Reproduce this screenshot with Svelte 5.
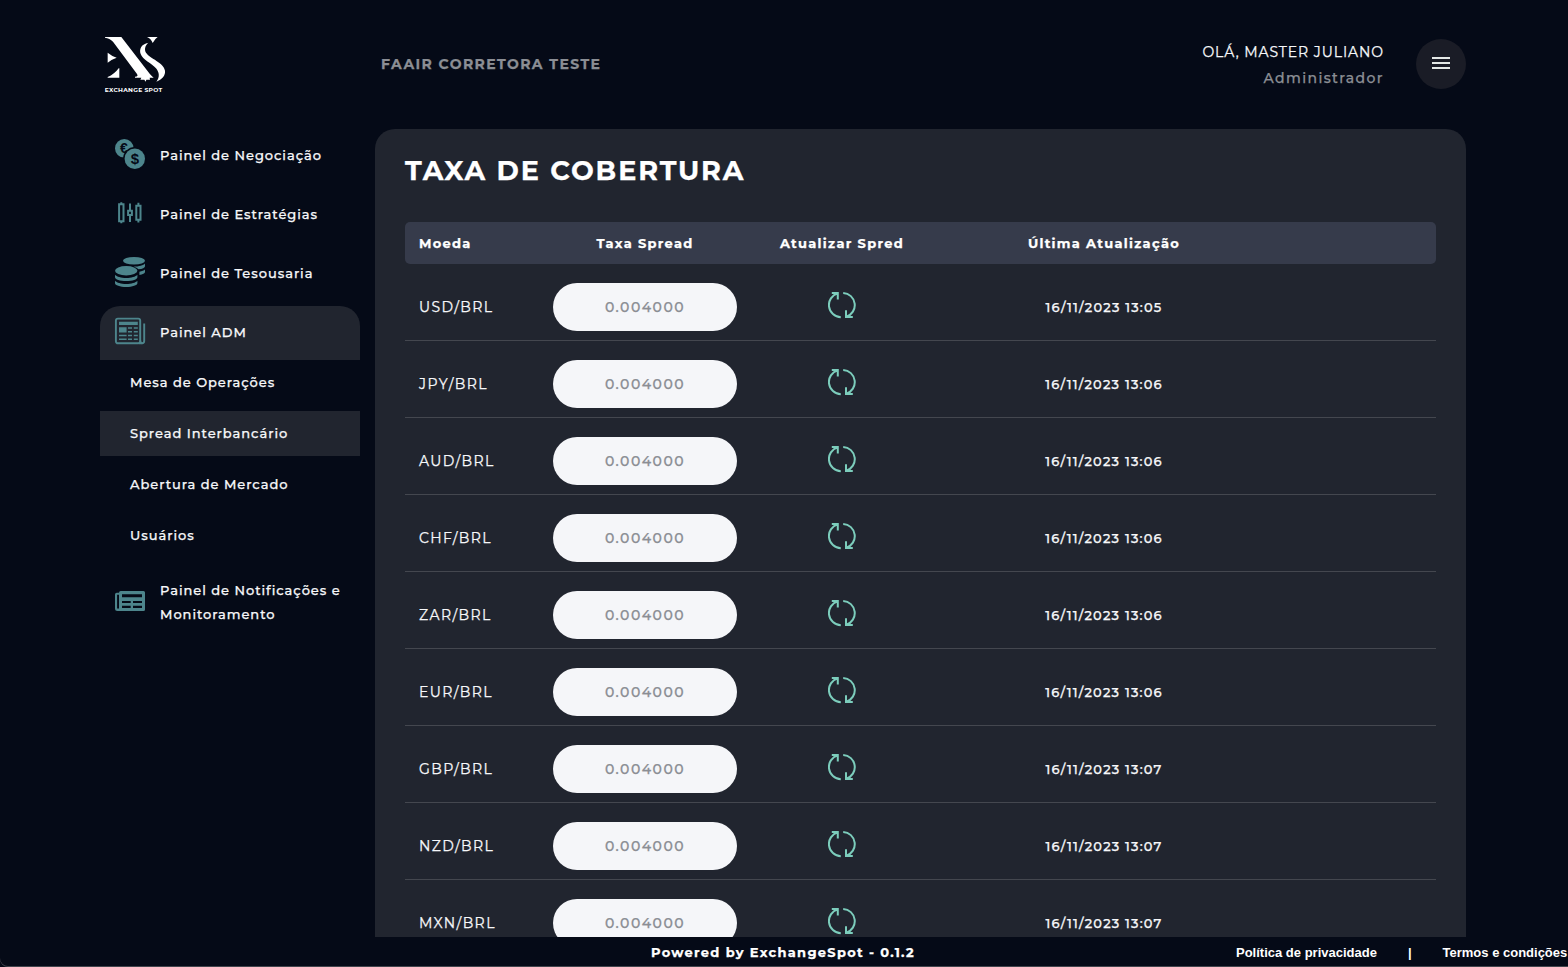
<script>
  const top = [
    { label: 'Painel de Negociação', icon: 'coins' },
    { label: 'Painel de Estratégias', icon: 'candles' },
    { label: 'Painel de Tesousaria', icon: 'stack' },
    { label: 'Painel ADM', icon: 'paper', open: true }
  ];
  const sub = ['Mesa de Operações', 'Spread Interbancário', 'Abertura de Mercado', 'Usuários'];
  const activeSub = 'Spread Interbancário';
  const rows = [
    ['USD', '13:05'], ['JPY', '13:06'], ['AUD', '13:06'], ['CHF', '13:06'], ['ZAR', '13:06'],
    ['EUR', '13:06'], ['GBP', '13:07'], ['NZD', '13:07'], ['MXN', '13:07']
  ].map(([code, time]) => ({ pair: `${code}/BRL`, rate: '0.004000', updated: `16/11/2023 ${time}` }));
</script>

{#snippet icon(name)}
  <svg class="icon" viewBox="0 0 30 30" width="30" height="30" aria-hidden="true">
    {#if name === 'coins'}
      <circle cx="9.3" cy="9.3" r="9.3" fill="#4d858c" />
      <text x="8.800" y="14" font-size="14" font-weight="700" text-anchor="middle" fill="#050a17">€</text>
      <circle cx="19.8" cy="19.8" r="11.8" fill="#050a17" />
      <circle cx="19.8" cy="19.8" r="10.2" fill="#4d858c" />
      <text x="19.8" y="24.8" font-size="15" font-weight="700" text-anchor="middle" fill="#050a17">$</text>
    {:else if name === 'candles'}
      <g fill="none" stroke="#4d858c" stroke-width="2">
        <path d="M4.1 6.200h4.400v17H4.100zM13.100 12.700h3.800v4.400h-3.800zM21.300 7.800h4.200v14h-4.200z" />
        <path d="M6.300 4.200v2M6.300 23.200v2M15 5.500v7.200M15 17.100v7M23.400 4.700v3.100M23.400 21.800v2.800" />
      </g>
    {:else if name === 'stack'}
      <g fill="#4d858c">
        <ellipse cx="19" cy="3.8" rx="11" ry="3.8" />
        <path d="M30 6.600v2.600c0 1.400-2.400 2.700-6.600 3.100-1-1.200-2.600-2-4.800-2.600 5.300 0 9.800-1.200 11.400-3.100z" />
        <path d="M30 12.600v2.500c0 1.300-2.300 2.500-5.600 3v-3.300c2.600-.5 4.600-1.300 5.600-2.200z" />
        <ellipse cx="11.200" cy="13.800" rx="11.200" ry="4.700" />
        <path d="M0 17.700c1.800 2 6 3.200 11.200 3.200s9.400-1.200 11.200-3.200v2.600c0 2.100-5 3.800-11.200 3.800S0 22.400 0 20.300z" />
        <path d="M0 23.700c1.800 2 6 3.200 11.200 3.200s9.400-1.200 11.200-3.200v2.600c0 2-5 3.700-11.200 3.700S0 28.300 0 26.300z" />
      </g>
    {:else if name === 'paper'}
      <g fill="none" stroke="#4d858c" stroke-width="1.900">
        <rect x="0.900" y="2.600" width="24.300" height="24.700" rx="2" />
        <path d="M24 27.300h3a2.200 2.200 0 0 0 2.200-2.200V7.600" />
        <path d="M25.300 24.500c0 1.700.5 2.800 2 2.800" />
      </g>
      <g fill="#4d858c">
        <path d="M4 5.700h18.800v3.400H4zM4 11.200h7.600v5.300H4z" />
        <path d="M13 11.200h4v1.500h-4zM18.800 11.200h4v1.500h-4zM13 15h4v1.500h-4zM18.800 15h4v1.500h-4zM4 18.800h7.600v1.500H4zM13 18.800h4v1.500h-4zM18.800 18.800h4v1.500h-4zM4 22.600h7.600v1.500H4zM13 22.600h4v1.500h-4zM18.800 22.600h4v1.500h-4z" />
      </g>
    {:else}
      <path fill="#4d858c" fill-rule="evenodd" d="M5.700 5H28.500A1.500 1.500 0 0 1 30 6.500v17A1.500 1.500 0 0 1 28.500 25H2.500A2.500 2.500 0 0 1 0 22.500V8.500A1.700 1.700 0 0 1 1.700 6.800H4V6.700A1.700 1.700 0 0 1 5.700 5zM2.100 8.700v13a.9.900 0 0 0 1.900 0v-13zM7 8.200v3h20v-3zM7 14.900V17h8.700v-2.100zM18 14.900V17h9v-2.100zM7 19.800V22h8.700v-2.200zM18 19.800V22h9v-2.200z" />
    {/if}
  </svg>
{/snippet}

<div class="page">
  <header>
    <svg class="logo" viewBox="0 0 240 225" width="80" height="75" aria-label="Exchange Spot">
      <g fill="#fff">
        <path d="M30 36H79L164 146Q170 153 176 158H164L165 164H154L152 170L148 164H136L139 158H120V155Q131 155 126 147L54 50Q44 39 30 38Z" />
        <path d="M156 36H188Q180 41 173 54Q168 41 156 36Z" />
        <path d="M160 53C139 57 132 72 137 87C143 104 170 115 183 130C193 142 195 157 184 170C201 163 212 151 210 137C206 112 165 101 153 83C147 72 151 61 160 53Z" />
        <path d="M38 83Q50 93 65 98Q50 103 38 113Z" />
        <path d="M73 130V158H38V156Q58 148 71 130Z" />
      </g>
      <text x="29" y="200" font-size="18" font-weight="700" fill="#fff" textLength="173">EXCHANGE SPOT</text>
    </svg>
    <div class="broker">FAAIR CORRETORA TESTE</div>
    <div class="user">
      <div class="name">OLÁ, MASTER JULIANO</div>
      <div class="role">Administrador</div>
    </div>
    <button class="menu" aria-label="Menu">
      <svg viewBox="0 0 24 24" width="24" height="24"><path fill="#e4e8e6" d="M3 6h18v2H3zM3 11h18v2H3zM3 16h18v2H3z" /></svg>
    </button>
  </header>

  <div class="body">
    <nav>
      {#each top as item}
        <div class="item" class:open={item.open}>{@render icon(item.icon)}<span>{item.label}</span></div>
      {/each}
      <div class="sub">
        {#each sub as label}
          <div class="subitem" class:active={label === activeSub}>{label}</div>
        {/each}
      </div>
      <div class="item tall">{@render icon('news')}<span>Painel de Notificações e Monitoramento</span></div>
    </nav>

    <main>
      <h1>TAXA DE COBERTURA</h1>
      <div class="grid head">
        <div class="first">Moeda</div><div>Taxa Spread</div><div>Atualizar Spred</div><div>Última Atualização</div>
      </div>
      {#each rows as row}
        <div class="grid row">
          <div class="first pair">{row.pair}</div>
          <div><span class="rate">{row.rate}</span></div>
          <div>
            <svg class="refresh" viewBox="0 0 28 28" width="28" height="28" aria-hidden="true">
              <g fill="none" stroke="#7ccdbc" stroke-width="2">
                <path d="M12.800 26.200A12.200 12.200 0 0 1 9.700 2.300M3.800 2h6v6.600" />
                <path d="M15.200 1.900A12.200 12.200 0 0 1 18.300 25.700M24.800 26H18v-6.700" />
              </g>
            </svg>
          </div>
          <div class="date">{row.updated}</div>
        </div>
      {/each}
    </main>
  </div>

  <footer>
    <div class="powered">Powered by ExchangeSpot - 0.1.2</div>
    <div class="links"><span>Política de privacidade</span><span>|</span><span>Termos e condições</span></div>
  </footer>
</div>

<style>
  :global(body) { background: #050a17; overflow: hidden; }
  .page {
    box-sizing: border-box;
    width: 1568px;
    height: 967px;
    overflow: hidden;
    display: flex;
    flex-direction: column;
    background: #050a17;
    box-shadow: inset 0 -1px #42454d;
    border-bottom-left-radius: 8px;
    color: #f7f8fa;
    font: 500 13px/24px Montserrat, Inter, sans-serif;
    letter-spacing: 0.96px;
    -webkit-text-stroke: 0.25px currentColor;
  }
  header {
    box-sizing: border-box;
    flex: none;
    height: 129px;
    padding: 25px 102px 0 95px;
    display: flex;
    align-items: flex-start;
  }
  svg { -webkit-text-stroke: 0; }
  .logo { display: block; }
  .logo text { letter-spacing: 0; }
  .broker {
    margin: 27px 0 0 206px;
    font-size: 14px;
    font-weight: 700;
    letter-spacing: 1.4px;
    color: #8b8e94;
  }
  .user { margin: 14px 32px 0 auto; text-align: right; font-size: 14px; line-height: 26px; }
  .name { font-weight: 400; letter-spacing: 0.93px; }
  .role { letter-spacing: 1.4px; color: #8b8e94; }
  .menu {
    width: 50px;
    height: 50px;
    margin-top: 14px;
    padding: 0 0 2px;
    border: 0;
    border-radius: 50%;
    background: #1a1c26;
    display: flex;
    align-items: center;
    justify-content: center;
  }
  .body { flex: 1; min-height: 0; display: flex; gap: 15px; padding: 0 102px 0 100px; }
  nav { width: 260px; flex: none; }
  .item {
    display: flex;
    align-items: center;
    gap: 15px;
    padding: 14px 15px 16px;
    margin-bottom: 5px;
  }
  .item .icon { flex: none; margin: -4px 0 -2px; overflow: visible; }
  .icon text { font-family: "Liberation Sans", Arial, sans-serif; letter-spacing: 0; }
  .item span { margin-right: -8px; }
  .item.open { background: #21252f; border-radius: 20px 20px 0 0; margin-bottom: 0; }
  .item.tall { padding: 15px; }
  .sub { display: flex; flex-direction: column; gap: 6px; margin-bottom: 5px; }
  .subitem { height: 45px; line-height: 45px; padding-left: 30px; }
  .subitem.active { background: #21252f; }
  main {
    flex: 1;
    box-sizing: border-box;
    padding: 24px 30px 0;
    overflow: hidden;
    background: #21252f;
    border-radius: 20px 20px 0 0;
  }
  h1 { margin: 0 0 33px; font-size: 27px; line-height: 36px; font-weight: 700; letter-spacing: 1.9px; color: #fff; }
  .grid {
    box-sizing: border-box;
    display: grid;
    grid-template-columns: 140px 200px 194px 330px;
    align-items: center;
    text-align: center;
  }
  .first { text-align: left; padding-left: 14px; }
  .head {
    height: 42px;
    border-radius: 5px;
    background: #363b4b;
    font-weight: 700;
    letter-spacing: 1.3px;
    color: #fff;
  }
  .row { height: 77px; padding: 19px 0 9px; border-bottom: 1px solid #44474f; }
  .pair { font-size: 14px; font-weight: 400; letter-spacing: 1.4px; }
  .rate {
    display: block;
    width: 184px;
    margin: 0 auto;
    border-radius: 24px;
    background: #f5f6f9;
    color: #8b8e94;
    font-size: 14px;
    line-height: 48px;
    letter-spacing: 1.5px;
  }
  .refresh { display: block; margin: -4px auto 0; }
  .date { letter-spacing: 1.18px; }
  footer {
    flex: none;
    height: 30px;
    line-height: 31px;
    padding-left: 651px;
    display: flex;
    white-space: nowrap;
    font-weight: 700;
    letter-spacing: 1.3px;
    color: #fff;
  }
  .powered { width: 585px; flex: none; }
  .links {
    display: flex;
    gap: 31px;
    font-family: "Liberation Sans", Arial, sans-serif;
    letter-spacing: 0;
    -webkit-text-stroke: 0;
  }
</style>
